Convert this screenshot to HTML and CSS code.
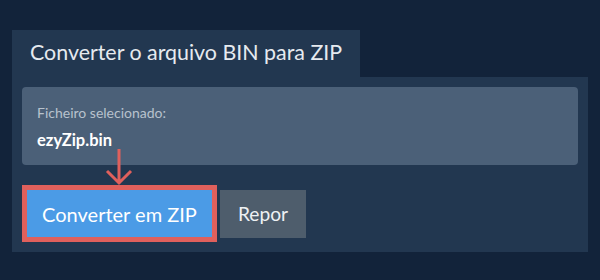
FILE: index.html
```html
<!DOCTYPE html>
<html lang="pt">
<head>
<meta charset="utf-8">
<link rel="stylesheet" href="styles.css">
</head>
<body>
<div class="wrap">
  <div class="tab">Converter o arquivo BIN para ZIP</div>
  <div class="panel">
    <div class="info">
      <div class="label">Ficheiro selecionado:</div>
      <div class="file">ezyZip.bin</div>
    </div>
    <div class="actions">
      <svg class="arrow" width="28" height="38" viewBox="0 0 28 38">
        <path d="M14 1 V35 M2 23 L14 35 L26 23" fill="none" stroke="#e0605c" stroke-width="3"/>
      </svg>
      <button class="btn convert">Converter em ZIP</button>
      <button class="btn reset">Repor</button>
    </div>
  </div>
</div>
</body>
</html>
```
FILE: styles.css
```css
html, body {
  margin: 0;
  padding: 0;
  background: #12233a;
  font-family: Lato, "Noto Sans", sans-serif;
}
.wrap {
  padding: 30px 12px 0 12px;
}
.tab {
  display: inline-block;
  box-sizing: border-box;
  width: 348px;
  height: 47px;
  padding: 9px 0 0 18px;
  background: #223750;
  color: #e6eaef;
  font-size: 21.4px;
  line-height: 26px;
}
.panel {
  box-sizing: border-box;
  width: 576px;
  height: 175px;
  padding: 10px;
  background: #223750;
}
.info {
  box-sizing: border-box;
  height: 78px;
  padding: 18px 15px 0 15px;
  background: #4b6078;
  border-radius: 4px;
}
.label {
  color: #b8c2cd;
  font-size: 14px;
  line-height: 16px;
}
.file {
  margin-top: 9px;
  color: #ffffff;
  font-weight: bold;
  font-size: 16.5px;
  line-height: 20px;
}
.actions {
  position: relative;
  display: flex;
  align-items: center;
  gap: 3px;
  margin-top: 20px;
}
.arrow {
  position: absolute;
  left: 83px;
  top: -37px;
}
.btn {
  font-family: Lato, "Noto Sans", sans-serif;
  font-size: 20px;
  color: #ffffff;
  border: none;
  margin: 0;
  cursor: pointer;
}
.convert {
  box-sizing: border-box;
  width: 195px;
  height: 57px;
  background: #4b9be6;
  border: 5px solid #e0605c;
  padding: 0;
}
.reset {
  box-sizing: border-box;
  width: 86px;
  height: 48px;
  background: #4e5d6c;
  color: #eef1f4;
  padding: 0;
  font-size: 19.2px;
}
```
